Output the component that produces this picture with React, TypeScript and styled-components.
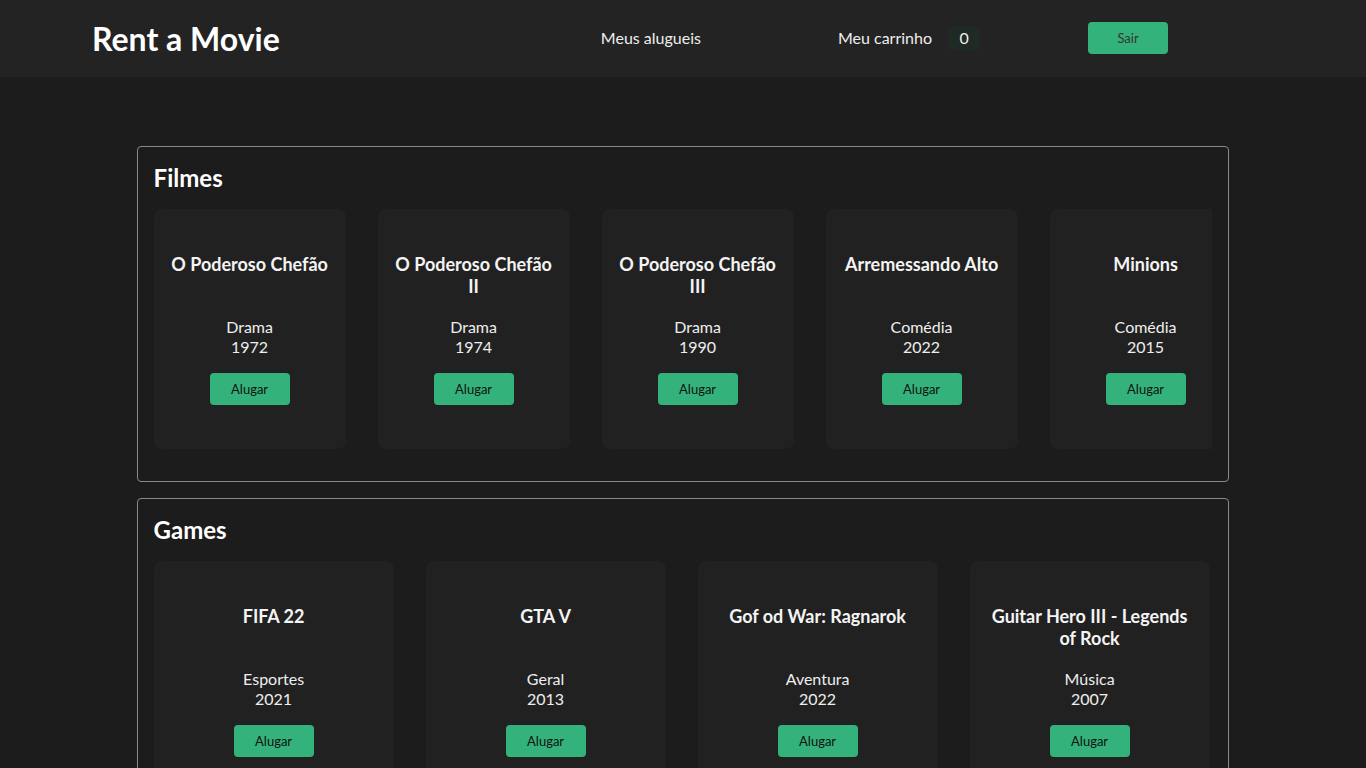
import React from "react";
import styled, { createGlobalStyle } from "styled-components";

const Global = createGlobalStyle`
  html, body { margin: 0; padding: 0; background: #1c1c1c; }
  body { font-family: Lato, "Open Sans", sans-serif; color: #f2f2f2; }
  ::-webkit-scrollbar { width: 4px; height: 4px; }
  ::-webkit-scrollbar-track { background: #1c1c1c; }
  ::-webkit-scrollbar-thumb { background: #8c8c8c; border-radius: 2px; }
  * { box-sizing: border-box; }
`;

const Header = styled.header`
  height: 77px;
  background: #232323;
  display: flex;
  align-items: center;
  padding-left: 92px;
`;

const Logo = styled.h1`
  margin: -1px 0 0;
  font-size: 32px;
  font-weight: 700;
  color: #fff;
`;

const Nav = styled.nav`
  display: flex;
  align-items: center;
  margin-left: 321px;
  margin-top: -2px;
`;

const NavLink = styled.a<{ $after: number }>`
  font-size: 16px;
  color: #eee;
  text-decoration: none;
  margin-right: ${(p) => p.$after}px;
  display: flex;
  align-items: center;
`;

const Badge = styled.span`
  display: inline-flex;
  align-items: center;
  justify-content: center;
  width: 32px;
  height: 24px;
  margin-left: 16px;
  border-radius: 4px;
  background: #1f2a24;
  color: #eee;
  font-size: 16px;
`;

const GreenButton = styled.button<{ $text: string }>`
  width: 80px;
  height: 32px;
  border: none;
  border-radius: 4px;
  background: #33b37b;
  color: ${(p) => p.$text};
  font-family: Lato, sans-serif;
  font-size: 13px;
  cursor: pointer;
`;

const Main = styled.main`
  padding: 69px 0 8px;
  display: flex;
  flex-direction: column;
  gap: 16px;
`;

const Section = styled.section`
  width: 80%;
  margin: 0 auto;
  border: 1px solid #8a8a8a;
  border-radius: 4px;
  padding: 16px 16px 32px;
`;

const SectionTitle = styled.h2`
  margin: 0 0 17px;
  font-size: 24px;
  line-height: 29px;
  font-weight: 700;
  color: #fff;
`;

const Row = styled.div`
  display: flex;
  gap: 32px;
  overflow: hidden;
`;

const Card = styled.div<{ $w: number }>`
  flex: 0 0 ${(p) => p.$w}px;
  height: 240px;
  background: #212121;
  border-radius: 8px;
  padding: 44px 16px 0;
  display: flex;
  flex-direction: column;
  align-items: center;
  text-align: center;
`;

const CardTitle = styled.h3`
  margin: 0;
  font-size: 18px;
  line-height: 22px;
  font-weight: 700;
  min-height: 44px;
  color: #f4f4f4;
`;

const Info = styled.p`
  margin: 20px 0 16px;
  font-size: 16px;
  line-height: 20px;
  color: #eee;
`;

type Item = { title: string; genre: string; year: number };

const movies: Item[] = [
  { title: "O Poderoso Chefão", genre: "Drama", year: 1972 },
  { title: "O Poderoso Chefão II", genre: "Drama", year: 1974 },
  { title: "O Poderoso Chefão III", genre: "Drama", year: 1990 },
  { title: "Arremessando Alto", genre: "Comédia", year: 2022 },
  { title: "Minions", genre: "Comédia", year: 2015 },
];

const games: Item[] = [
  { title: "FIFA 22", genre: "Esportes", year: 2021 },
  { title: "GTA V", genre: "Geral", year: 2013 },
  { title: "Gof od War: Ragnarok", genre: "Aventura", year: 2022 },
  { title: "Guitar Hero III - Legends of Rock", genre: "Música", year: 2007 },
];

function Shelf({ name, items, w }: { name: string; items: Item[]; w: number }) {
  return (
    <Section>
      <SectionTitle>{name}</SectionTitle>
      <Row>
        {items.map((it) => (
          <Card key={it.title} $w={w}>
            <CardTitle>{it.title}</CardTitle>
            <Info>
              {it.genre}
              <br />
              {it.year}
            </Info>
            <GreenButton $text="#111">Alugar</GreenButton>
          </Card>
        ))}
      </Row>
    </Section>
  );
}

export default function App() {
  return (
    <>
      <Global />
      <Header>
        <Logo>Rent a Movie</Logo>
        <Nav>
          <NavLink href="#" $after={137}>Meus alugueis</NavLink>
          <NavLink href="#" $after={108}>
            Meu carrinho <Badge>0</Badge>
          </NavLink>
          <GreenButton $text="#333">Sair</GreenButton>
        </Nav>
      </Header>
      <Main>
        <Shelf name="Filmes" items={movies} w={192} />
        <Shelf name="Games" items={games} w={240} />
      </Main>
    </>
  );
}
